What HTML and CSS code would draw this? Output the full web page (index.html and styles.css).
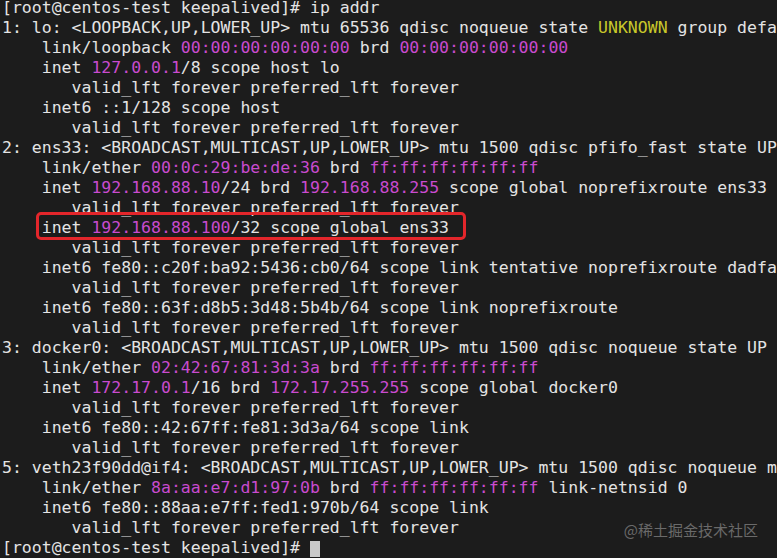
FILE: index.html
```html
<!DOCTYPE html>
<html lang="en">
<head>
    <meta charset="UTF-8">
    <title>ip addr</title>
    <link rel="stylesheet" href="styles.css">
</head>
<body>
    <div class="terminal">
<pre class="output">[root@centos-test keepalived]# ip addr
1: lo: &lt;LOOPBACK,UP,LOWER_UP&gt; mtu 65536 qdisc noqueue state <span class="warn">UNKNOWN</span> group default qlen 1000
    link/loopback <span class="addr">00:00:00:00:00:00</span> brd <span class="addr">00:00:00:00:00:00</span>
    inet <span class="addr">127.0.0.1</span>/8 scope host lo
       valid_lft forever preferred_lft forever
    inet6 ::1/128 scope host
       valid_lft forever preferred_lft forever
2: ens33: &lt;BROADCAST,MULTICAST,UP,LOWER_UP&gt; mtu 1500 qdisc pfifo_fast state UP group default qlen 1000
    link/ether <span class="addr">00:0c:29:be:de:36</span> brd <span class="addr">ff:ff:ff:ff:ff:ff</span>
    inet <span class="addr">192.168.88.10</span>/24 brd <span class="addr">192.168.88.255</span> scope global noprefixroute ens33
       valid_lft forever preferred_lft forever
    <span class="mark">inet <span class="addr">192.168.88.100</span>/32 scope global ens33</span>
       valid_lft forever preferred_lft forever
    inet6 fe80::c20f:ba92:5436:cb0/64 scope link tentative noprefixroute dadfailed
       valid_lft forever preferred_lft forever
    inet6 fe80::63f:d8b5:3d48:5b4b/64 scope link noprefixroute
       valid_lft forever preferred_lft forever
3: docker0: &lt;BROADCAST,MULTICAST,UP,LOWER_UP&gt; mtu 1500 qdisc noqueue state UP group default
    link/ether <span class="addr">02:42:67:81:3d:3a</span> brd <span class="addr">ff:ff:ff:ff:ff:ff</span>
    inet <span class="addr">172.17.0.1</span>/16 brd <span class="addr">172.17.255.255</span> scope global docker0
       valid_lft forever preferred_lft forever
    inet6 fe80::42:67ff:fe81:3d3a/64 scope link
       valid_lft forever preferred_lft forever
5: veth23f90dd@if4: &lt;BROADCAST,MULTICAST,UP,LOWER_UP&gt; mtu 1500 qdisc noqueue master docker0 state UP group default
    link/ether <span class="addr">8a:aa:e7:d1:97:0b</span> brd <span class="addr">ff:ff:ff:ff:ff:ff</span> link-netnsid 0
    inet6 fe80::88aa:e7ff:fed1:970b/64 scope link
       valid_lft forever preferred_lft forever
[root@centos-test keepalived]# <span class="cursor"> </span></pre>
        <div class="watermark">@稀土掘金技术社区</div>
    </div>
</body>
</html>
```

FILE: styles.css
```css
html, body {
    margin: 0;
    padding: 0;
    background-color: #1c1c1c;
}
.terminal {
    position: relative;
    width: 777px;
    height: 558px;
    overflow: hidden;
    background-color: #1c1c1c;
}
.output {
    margin: -2px 0 0 2px;
    font-family: "DejaVu Sans Mono", "Liberation Mono", monospace;
    font-size: 16.5px;
    line-height: 20px;
    color: #e4e4e4;
    white-space: pre;
}
.addr { color: #c94bcf; }
.warn { color: #c8c82a; }
.mark {
    position: relative;
    display: inline-block;
    line-height: 20px;
}
.mark::after {
    content: "";
    position: absolute;
    top: -6px;
    bottom: -2px;
    left: -6px;
    right: -17px;
    border: 3px solid #e3262b;
    border-radius: 5px;
}
.cursor {
    display: inline-block;
    width: 10px;
    height: 16px;
    vertical-align: -3px;
    background-color: #c9c9c9;
}
.watermark {
    position: absolute;
    right: 19px;
    top: 520px;
    font-family: "Noto Sans CJK SC", "Noto Sans", sans-serif;
    font-size: 15px;
    line-height: 20px;
    color: #6a6a6a;
}
```
